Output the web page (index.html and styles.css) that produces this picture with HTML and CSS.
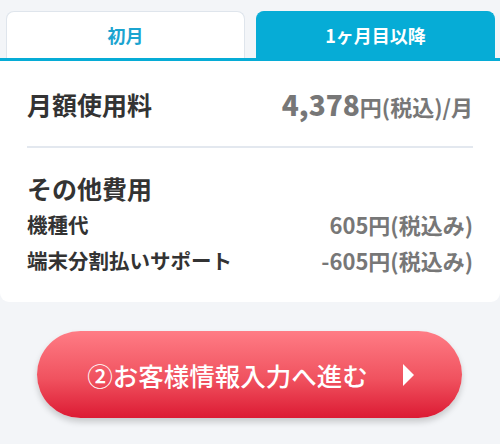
FILE: index.html
```html
<!DOCTYPE html>
<html lang="ja">
<head>
	<meta charset="UTF-8">
	<title>料金</title>
	<link rel="stylesheet" href="styles.css">
</head>
<body>
	<div id="tabs">
		<div class="tab">初月</div>
		<div class="tab selected">1ヶ月目以降</div>
	</div>
	<div id="card">
		<div class="row main">
			<span class="label">月額使用料</span>
			<span class="price"><b>4,378</b>円(税込)/月</span>
		</div>
		<div class="line"></div>
		<div class="title">その他費用</div>
		<div class="row sub">
			<span class="label">機種代</span>
			<span class="price">605円(税込み)</span>
		</div>
		<div class="row sub">
			<span class="label">端末分割払いサポート</span>
			<span class="price">-605円(税込み)</span>
		</div>
	</div>
	<div id="action">
		<a href="#" class="btn">②お客様情報入力へ進む<span class="arrow"></span></a>
	</div>
</body>
</html>
```

FILE: styles.css
```css
*{
	margin: 0;
	padding: 0;
	box-sizing: border-box;
}
body{
	width: 500px;
	height: 444px;
	background: #f3f5f8;
	font-family: "Noto Sans CJK JP", "Noto Sans", sans-serif;
	color: #333;
	overflow: hidden;
}
#tabs{
	display: flex;
	gap: 11px;
	padding: 11px 5px 0 6px;
	border-bottom: 3px solid #06acd6;
}
.tab{
	flex: 1;
	height: 47px;
	display: flex;
	align-items: center;
	justify-content: center;
	background: #fff;
	border: 1px solid #dfe5ec;
	border-bottom: none;
	border-radius: 8px 8px 0 0;
	color: #1ba4d0;
	font-size: 18px;
	font-weight: bold;
}
.tab.selected{
	background: #06acd6;
	border-color: #06acd6;
	color: #fff;
}
#card{
	background: #fff;
	border-radius: 0 0 9px 9px;
	padding: 0 27px 24px;
}
.row{
	display: flex;
	justify-content: space-between;
	align-items: center;
	font-weight: bold;
}
.row .price{
	color: #777;
}
.main{
	height: 85px;
	font-size: 25px;
}
.main .price{
	font-size: 22px;
}
.main .price b{
	font-size: 28px;
}
.line{
	height: 2px;
	background: #e3e8ef;
}
.title{
	font-size: 25px;
	font-weight: bold;
	padding-top: 22px;
	line-height: 36px;
}
.sub{
	font-size: 20.5px;
	height: 36px;
}
.sub .price{
	font-size: 22px;
}
#action{
	padding: 29px 38px 0 37px;
}
.btn{
	display: flex;
	align-items: center;
	justify-content: center;
	gap: 35px;
	height: 87px;
	border-radius: 44px;
	background: linear-gradient(#ff7c85, #f0525f 55%, #dc1a33);
	box-shadow: 0 4px 6px rgba(0,0,0,.18);
	color: #fff;
	font-size: 25.5px;
	font-weight: 500;
	text-decoration: none;
	padding-left: 2px;
}
.arrow{
	width: 0;
	height: 0;
	border-top: 11px solid transparent;
	border-bottom: 11px solid transparent;
	border-left: 11px solid #fff;
}
```
